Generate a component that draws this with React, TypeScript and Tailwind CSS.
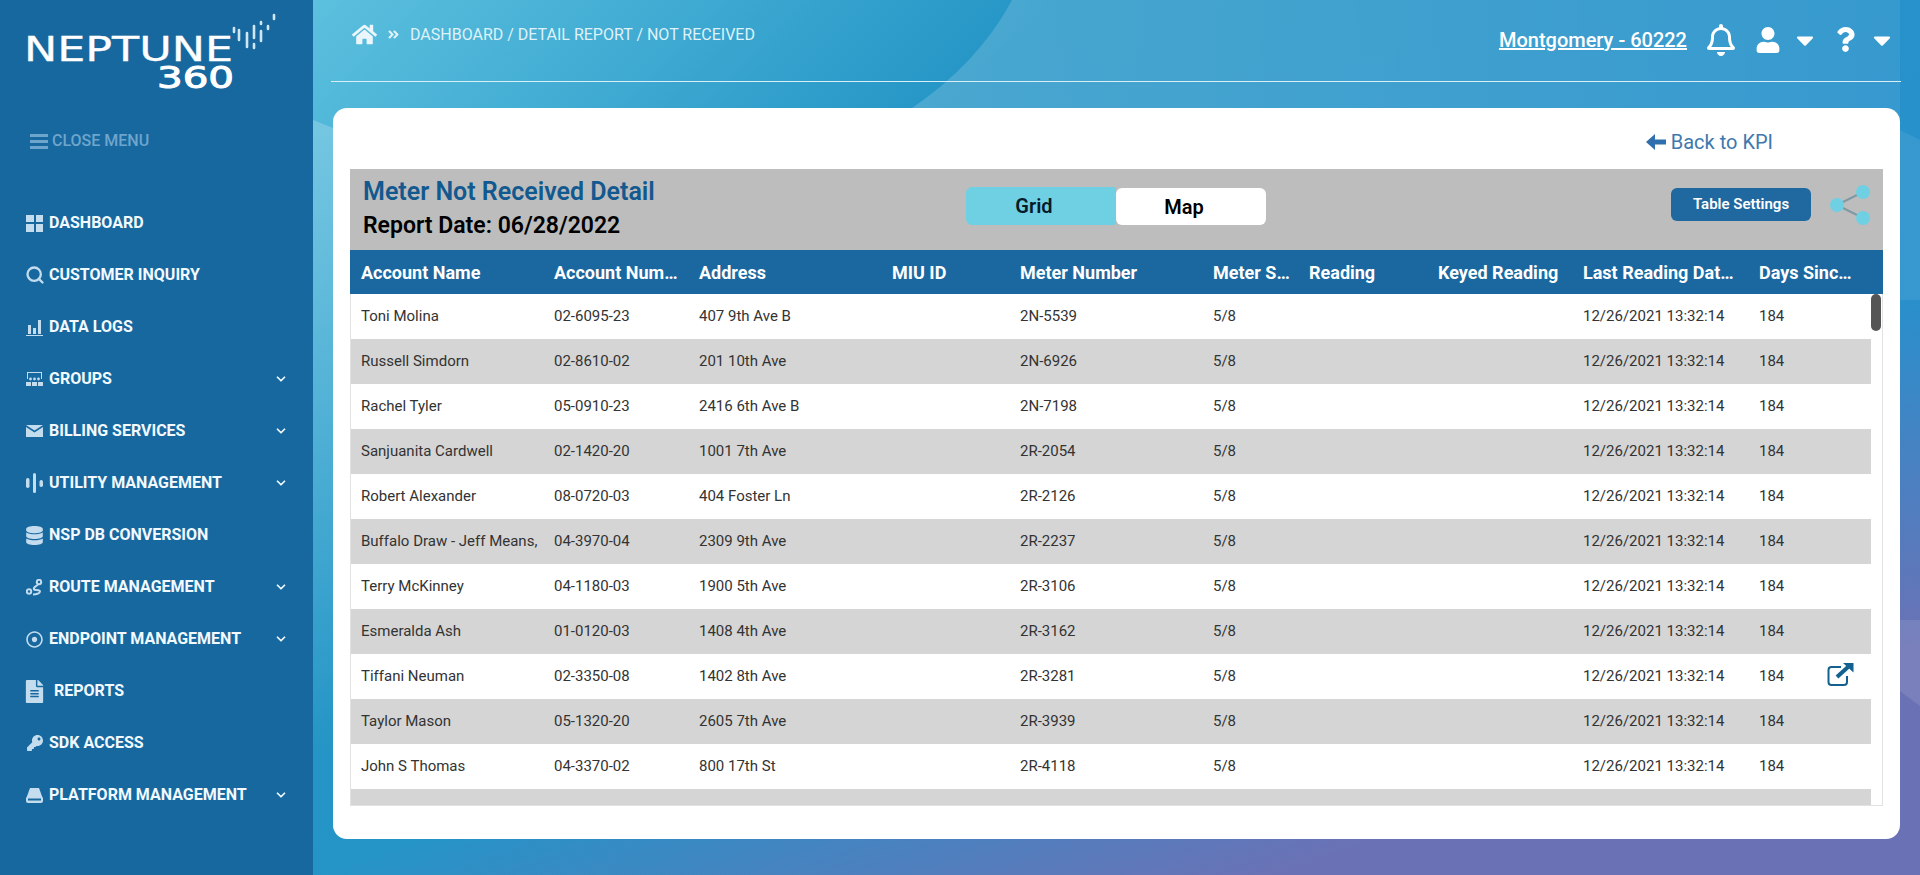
import React from "react";
import { ChevronDown, Search } from "lucide-react";
import { FaHome, FaRegBell, FaUser, FaQuestion, FaCaretDown, FaDatabase, FaRegDotCircle, FaFileAlt, FaKey, FaAngleDoubleRight } from "react-icons/fa";

const I = "text-[#c3dcee]";

const Grid4 = () => (
  <span className="grid grid-cols-2 gap-[2px] w-[17px] h-[17px]">
    <span className="bg-[#c3dcee]" />
    <span className="bg-[#c3dcee]" />
    <span className="bg-[#c3dcee]" />
    <span className="bg-[#c3dcee]" />
  </span>
);
const Logs = () => (
  <svg width="17" height="17" viewBox="0 0 17 17" fill="#c3dcee">
    <rect x="2" y="6" width="3" height="9" />
    <rect x="7" y="9" width="3" height="6" />
    <rect x="12" y="1" width="3" height="14" />
    <rect x="0" y="16" width="17" height="1" />
  </svg>
);
const Groups = () => (
  <svg width="17" height="14" viewBox="0 0 17 14" fill="#c3dcee">
    <path d="M1 0h15v7h-1V1H2v6H1z" />
    <circle cx="4.5" cy="7" r="1.4" />
    <circle cx="8.5" cy="7" r="1.4" />
    <circle cx="12.5" cy="7" r="1.4" />
    <rect x="0" y="10" width="5" height="4" />
    <rect x="6" y="10" width="5" height="4" />
    <rect x="12" y="10" width="5" height="4" />
  </svg>
);
const Mail = () => (
  <svg width="17" height="12" viewBox="0 0 17 12" fill="#c3dcee">
    <path d="M0 0h17L8.5 5.5z" />
    <path d="M0 2l8.5 5.5L17 2v10H0z" />
  </svg>
);
const Utility = () => (
  <svg width="17" height="20" viewBox="0 0 17 20" fill="#c3dcee">
    <rect x="0" y="5" width="3.5" height="10" rx="1.7" />
    <rect x="7" y="0" width="3" height="20" rx="1.5" />
    <rect x="13.5" y="7" width="3.5" height="7" rx="1.7" />
  </svg>
);
const Route = () => (
  <svg width="17" height="17" viewBox="0 0 17 17" fill="none" stroke="#c3dcee" strokeWidth="2">
    <circle cx="3" cy="12.5" r="2.2" />
    <circle cx="13" cy="3" r="2.2" />
    <path d="M12 5.5C10 8 7 7.5 8 10.5c.5 1.2 6-.5 6 2 0 2-4 3-7 3" />
  </svg>
);
const Drive = () => (
  <svg width="17" height="15" viewBox="0 0 17 15" fill="#c3dcee">
    <path d="M4 0h9l3.5 9.5H.5z" />
    <path d="M0 10a1.5 1.5 0 0 1 1.5-1h14a1.5 1.5 0 0 1 1.5 1v3a2 2 0 0 1-2 2H2a2 2 0 0 1-2-2z" />
    <rect x="2" y="10.5" width="13" height="2" fill="#17689f" />
  </svg>
);
const BackArrow = () => (
  <svg width="20" height="16" viewBox="0 0 20 16" fill="#2f6fad">
    <path d="M0 8L9 0V5.5H20V10.5H9V16Z" />
  </svg>
);

type Item = { label: string; icon: React.ReactNode; chevron?: boolean; gap?: string };
const items: Item[] = [
  { label: "DASHBOARD", icon: <Grid4 /> },
  { label: "CUSTOMER INQUIRY", icon: <Search size={20} strokeWidth={2.8} className={`${I} shrink-0`} /> },
  { label: "DATA LOGS", icon: <Logs /> },
  { label: "GROUPS", icon: <Groups />, chevron: true },
  { label: "BILLING SERVICES", icon: <Mail />, chevron: true },
  { label: "UTILITY MANAGEMENT", icon: <Utility />, chevron: true },
  { label: "NSP DB CONVERSION", icon: <FaDatabase size={19} className={`${I} shrink-0`} /> },
  { label: "ROUTE MANAGEMENT", icon: <Route />, chevron: true },
  { label: "ENDPOINT MANAGEMENT", icon: <FaRegDotCircle size={17} className={I} />, chevron: true },
  { label: "REPORTS", icon: <FaFileAlt size={23} className={`${I} shrink-0`} />, gap: "ml-[11px]" },
  { label: "SDK ACCESS", icon: <FaKey size={16} className={I} /> },
  { label: "PLATFORM MANAGEMENT", icon: <Drive />, chevron: true },
];

const rows = [
  ["Toni Molina", "02-6095-23", "407 9th Ave B", "2N-5539"],
  ["Russell Simdorn", "02-8610-02", "201 10th Ave", "2N-6926"],
  ["Rachel Tyler", "05-0910-23", "2416 6th Ave B", "2N-7198"],
  ["Sanjuanita Cardwell", "02-1420-20", "1001 7th Ave", "2R-2054"],
  ["Robert Alexander", "08-0720-03", "404 Foster Ln", "2R-2126"],
  ["Buffalo Draw - Jeff Means,", "04-3970-04", "2309 9th Ave", "2R-2237"],
  ["Terry McKinney", "04-1180-03", "1900 5th Ave", "2R-3106"],
  ["Esmeralda Ash", "01-0120-03", "1408 4th Ave", "2R-3162"],
  ["Tiffani Neuman", "02-3350-08", "1402 8th Ave", "2R-3281"],
  ["Taylor Mason", "05-1320-20", "2605 7th Ave", "2R-3939"],
  ["John S Thomas", "04-3370-02", "800 17th St", "2R-4118"],
];

const headers: [string, string][] = [
  ["Account Name", "pr-[9px]"],
  ["Account Number", "pr-[9px]"],
  ["Address", "pr-[9px]"],
  ["MIU ID", "pr-[9px]"],
  ["Meter Number", "pr-[9px]"],
  ["Meter Size", "pr-[6px]"],
  ["Reading", "pr-[9px]"],
  ["Keyed Reading", "pr-[9px]"],
  ["Last Reading Date Time", "pr-[9px]"],
  ["Days Since Last Read", "pr-[30px]"],
];

const Logo = () => (
  <svg width="313" height="100" viewBox="0 0 313 100" className="block">
    <text x="24" y="61" fontFamily="DejaVu Sans" fontSize="33" fill="#fff" stroke="#fff" strokeWidth="0.3" textLength="209" lengthAdjust="spacingAndGlyphs">NEPTUNE</text>
    <text x="157" y="88" fontFamily="DejaVu Sans" fontSize="30" fill="#fff" stroke="#fff" strokeWidth="1" textLength="77" lengthAdjust="spacingAndGlyphs">360</text>
    <g stroke="#cfe6f3" strokeWidth="2.6" strokeLinecap="round">
      <path d="M234 28v4M239 30v10M247 33v14M254 26v12M254 44v4M261 22v2M261 31v10M268 26v3M274 15v4" />
    </g>
  </svg>
);

export default function App() {
  return (
    <div className="flex w-full h-screen overflow-hidden font-[Roboto,sans-serif]">
      <aside className="w-[313px] shrink-0 bg-[#17689f] text-[#f2faff]">
        <Logo />
        <div className="flex items-center h-[32px] mt-[25px] pl-[30px] gap-[4px] text-[#6ea5cd] text-[16px] font-medium">
          <svg width="18" height="15" viewBox="0 0 18 15" fill="#6ea5cd">
            <rect width="18" height="3" />
            <rect y="6" width="18" height="3" />
            <rect y="12" width="18" height="3" />
          </svg>
          <span>CLOSE MENU</span>
        </div>
        <nav className="mt-[40px]">
          {items.map((it) => (
            <div key={it.label} className="flex items-center h-[52px] pl-[26px] pr-[25px]">
              <span className="w-[17px] flex justify-center items-center shrink-0">{it.icon}</span>
              <span className={`text-[16px] font-bold whitespace-nowrap ${it.gap ?? "ml-[6px]"}`}>{it.label}</span>
              {it.chevron && <ChevronDown size={14} strokeWidth={3} className="ml-auto" />}
            </div>
          ))}
        </nav>
      </aside>

      <main className="relative flex-1 min-w-0 bg-[linear-gradient(160deg,rgba(106,114,181,0)_60%,#6a72b5_84%),linear-gradient(135deg,#5cc0de_0%,#2495c6_30%,#2a8ecf_100%)]">
        <svg className="absolute inset-0 w-full h-full pointer-events-none" viewBox="0 0 1607 875" preserveAspectRatio="none">
          <defs>
            <linearGradient id="topLight" gradientUnits="userSpaceOnUse" x1="600" y1="0" x2="1607" y2="0">
              <stop offset="0" stopColor="#fff" stopOpacity="0.17" />
              <stop offset="1" stopColor="#fff" stopOpacity="0.07" />
            </linearGradient>
            <linearGradient id="leftLight" gradientUnits="userSpaceOnUse" x1="0" y1="120" x2="0" y2="760">
              <stop offset="0" stopColor="#fff" stopOpacity="0.2" />
              <stop offset="1" stopColor="#fff" stopOpacity="0" />
            </linearGradient>
          </defs>
          <path d="M699 0C675 45 640 80 599 108V300H1607V140L1587 130V0Z" fill="url(#topLight)" />
          <path d="M0 120L20 128V875H0Z" fill="url(#leftLight)" />
          <path d="M1572 680L1607 706V620H1572Z" fill="#fff" fillOpacity="0.1" />
        </svg>
        <div className="relative">
          <header className="flex items-center h-[82px] ml-[18px] mr-[19px] border-b border-[#d9eff8] pb-[2px]">
            <div className="flex items-center -mt-[10px] pl-[21px] text-[#dff2f9]">
              <FaHome size={25} className="text-[#eaf6fb]" />
              <FaAngleDoubleRight size={13} className="ml-[10px] text-[#dff2f9]" />
              <span className="ml-[10px] text-[16px]">DASHBOARD / DETAIL REPORT / NOT RECEIVED</span>
            </div>
            <div className="flex items-center ml-auto pr-[5px] text-white">
              <span className="text-[20px] font-medium underline">Montgomery - 60222</span>
              <FaRegBell size={32} className="ml-[18px]" />
              <FaUser size={26} className="ml-[18px]" />
              <FaCaretDown size={28} className="ml-[10px]" />
              <FaQuestion size={25} className="ml-[14px]" />
              <FaCaretDown size={28} className="ml-[10px]" />
            </div>
          </header>

          <section className="h-[731px] ml-[20px] mr-[20px] mt-[26px] bg-white rounded-[14px] px-[17px]">
            <div className="flex items-center justify-end h-[61px] pr-[110px] pt-[7px] text-[#3f78ad]">
              <BackArrow />
              <span className="ml-[5px] text-[20px]">Back to KPI</span>
            </div>

            <div className="flex items-center h-[81px] bg-[#bdbdbd] pl-[13px] pr-[13px]">
              <div className="w-[603px] -mt-[1px]">
                <div className="text-[25px] leading-[34px] font-semibold text-[#11598f]">Meter Not Received Detail</div>
                <div className="text-[23px] leading-[34px] font-semibold text-black">Report Date: 06/28/2022</div>
              </div>
              <div className="flex items-end -mt-[7px]">
                <div className="flex items-center justify-center w-[150px] h-[38px] pr-[14px] bg-[#6fd0e3] rounded-l-[6px] text-[20px] font-semibold text-[#071c2b]">Grid</div>
                <div className="flex items-center justify-center w-[150px] h-[37px] pr-[14px] bg-white rounded-[6px] text-[20px] font-semibold text-black">Map</div>
              </div>
              <button className="ml-auto w-[140px] h-[33px] rounded-[6px] bg-[#1f68a0] text-white text-[15px] font-semibold -mt-[10px]">Table Settings</button>
              <svg width="40" height="40" viewBox="0 0 40 40" className="ml-[19px] -mt-[10px]">
                <path d="M7 20L33 7M7 20L33 33" stroke="#7f9aa5" strokeWidth="2" />
                <circle cx="7" cy="20" r="7" fill="#6fd0e3" />
                <circle cx="33" cy="7" r="7" fill="#6fd0e3" />
                <circle cx="33" cy="33" r="7" fill="#6fd0e3" />
              </svg>
            </div>

            <div className="grid grid-cols-[193px_145px_193px_128px_193px_96px_129px_145px_176px_135px] h-[44px] bg-[#1a689f] text-white text-[18px] font-bold items-center">
              {headers.map(([h, pad]) => (
                <div key={h} className={`pl-[11px] truncate ${pad}`}>{h}</div>
              ))}
            </div>

            <div className="relative h-[512px] overflow-hidden border-l border-r border-b border-[#e2e2e2] pr-[11px]">
              {rows.map((r, i) => (
                <div key={r[0]} className={`relative grid grid-cols-[192px_145px_193px_128px_193px_96px_129px_145px_176px_123px] items-center h-[45px] text-[15px] text-[#333] ${i % 2 === 1 ? "bg-[#d5d5d5]" : "bg-white"}`}>
                  <div className="pl-[10px] whitespace-nowrap overflow-hidden">{r[0]}</div>
                  <div className="pl-[11px]">{r[1]}</div>
                  <div className="pl-[11px]">{r[2]}</div>
                  <div />
                  <div className="pl-[11px]">{r[3]}</div>
                  <div className="pl-[11px]">5/8</div>
                  <div />
                  <div />
                  <div className="pl-[11px]">12/26/2021 13:32:14</div>
                  <div className="pl-[11px]">184</div>
                  {i === 8 && (
                    <svg className="absolute right-[17px] top-[9px]" width="27" height="23" viewBox="0 0 27 23" fill="none" stroke="#12618f">
                      <path d="M14 4H4.5A3 3 0 0 0 1.5 7v12a3 3 0 0 0 3 3H17a3 3 0 0 0 3-3v-6" strokeWidth="2" />
                      <path d="M10 14L21 4" strokeWidth="4" />
                      <path d="M16 0H26.5V9.5Z" fill="#12618f" stroke="none" />
                    </svg>
                  )}
                </div>
              ))}
              <div className="h-[16px] bg-[#d5d5d5]" />
              <div className="absolute right-[1px] top-0 w-[10px] h-[37px] rounded-[5px] bg-[#555]" />
            </div>
          </section>
        </div>
      </main>
    </div>
  );
}
